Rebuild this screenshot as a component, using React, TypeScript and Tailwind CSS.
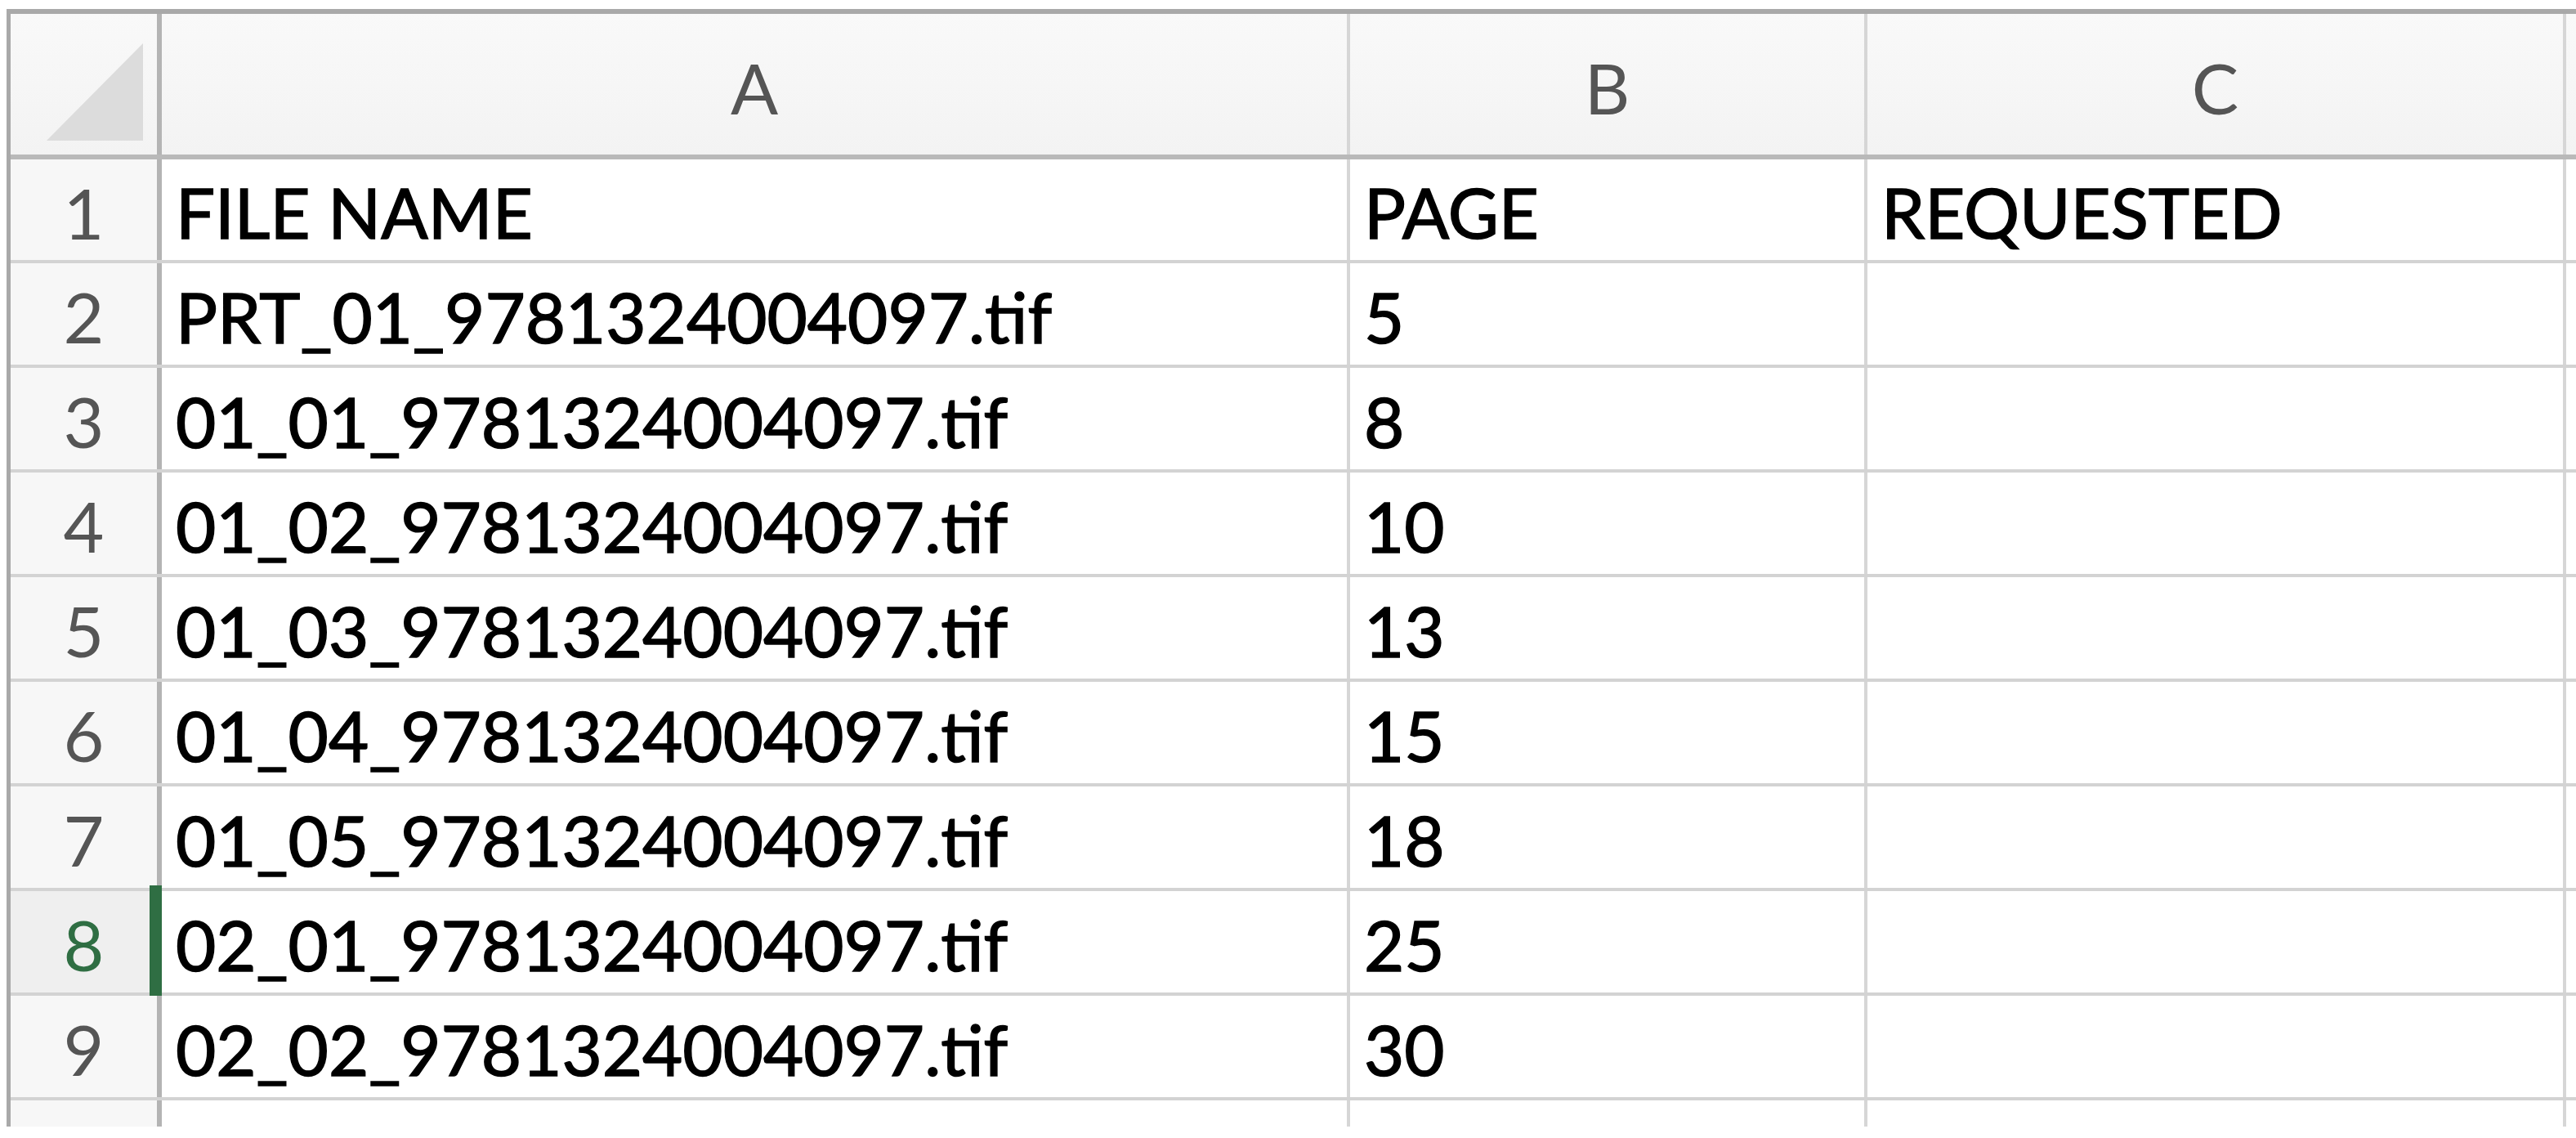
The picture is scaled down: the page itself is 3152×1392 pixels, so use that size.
import React from 'react';

const rows: string[][] = [
  ['FILE NAME', 'PAGE', 'REQUESTED'],
  ['PRT_01_9781324004097.tif', '5', ''],
  ['01_01_9781324004097.tif', '8', ''],
  ['01_02_9781324004097.tif', '10', ''],
  ['01_03_9781324004097.tif', '13', ''],
  ['01_04_9781324004097.tif', '15', ''],
  ['01_05_9781324004097.tif', '18', ''],
  ['02_01_9781324004097.tif', '25', ''],
  ['02_02_9781324004097.tif', '30', ''],
];

const cellText = "text-[85px] leading-none text-black [-webkit-text-stroke:1.5px_#000] pl-[17px] pt-[6px] flex items-center whitespace-nowrap";

export default function App() {
  return (
    <div className="w-[3152px] h-[1392px] bg-white overflow-hidden font-['Lato',sans-serif]">
      <div className="ml-[8px] mt-[11px] h-[1367px] overflow-hidden border-l-[5px] border-t-[6px] border-[#a9a9a9]">
        {/* column headers */}
        <div className="flex h-[178px] border-b-[6px] border-[#b9b9b9] bg-gradient-to-b from-[#f9f9f9] to-[#f3f3f3]">
          <div className="w-[185px] shrink-0 border-r-[6px] border-[#b4b4b4] flex justify-end items-end pr-[17px] pb-[17px]">
            <svg width="118" height="119" viewBox="0 0 118 119">
              <polygon points="0,119 118,0 118,119" fill="#dcdcdc" />
            </svg>
          </div>
          {[
            { l: 'A', w: 'w-[1454px]' },
            { l: 'B', w: 'w-[633px]' },
            { l: 'C', w: 'w-[855px]' },
          ].map(c => (
            <div key={c.l} className={`${c.w} shrink-0 border-r-4 border-[#d6d6d6] flex items-center justify-center pt-[8px] text-[86px] leading-none text-[#555]`}>
              {c.l}
            </div>
          ))}
          <div className="flex-1" />
        </div>

        {rows.map((r, i) => {
          const n = i + 1;
          const sel = n === 8;
          return (
            <div key={n} className={`flex border-b-4 border-[#d3d3d3] ${n === 1 ? 'h-[127px]' : 'h-[128px]'}`}>
              <div className={`relative w-[185px] shrink-0 border-r-[6px] border-[#b4b4b4] flex items-center justify-center pt-[6px] text-[86px] leading-none ${sel ? 'bg-[#efefef] text-[#2f6e43]' : 'bg-[#f7f7f7] text-[#555]'}`}>
                {n}
                {sel && <div className="absolute right-[-6px] top-[-7px] bottom-[-5px] w-[15px] bg-[#2f6e43]" />}
              </div>
              <div className={`w-[1454px] shrink-0 border-r-4 border-[#d6d6d6] ${cellText}`}>{r[0]}</div>
              <div className={`w-[633px] shrink-0 border-r-4 border-[#d6d6d6] ${cellText}`}>{r[1]}</div>
              <div className={`w-[855px] shrink-0 border-r-4 border-[#d6d6d6] ${cellText}`}>{r[2]}</div>
              <div className="flex-1" />
            </div>
          );
        })}

        {/* row 10, cut off by the bottom edge */}
        <div className="flex h-[128px]">
          <div className="w-[185px] shrink-0 border-r-[6px] border-[#b4b4b4] bg-[#f7f7f7]" />
          <div className="w-[1454px] shrink-0 border-r-4 border-[#d6d6d6]" />
          <div className="w-[633px] shrink-0 border-r-4 border-[#d6d6d6]" />
          <div className="w-[855px] shrink-0 border-r-4 border-[#d6d6d6]" />
          <div className="flex-1" />
        </div>
      </div>
    </div>
  );
}
